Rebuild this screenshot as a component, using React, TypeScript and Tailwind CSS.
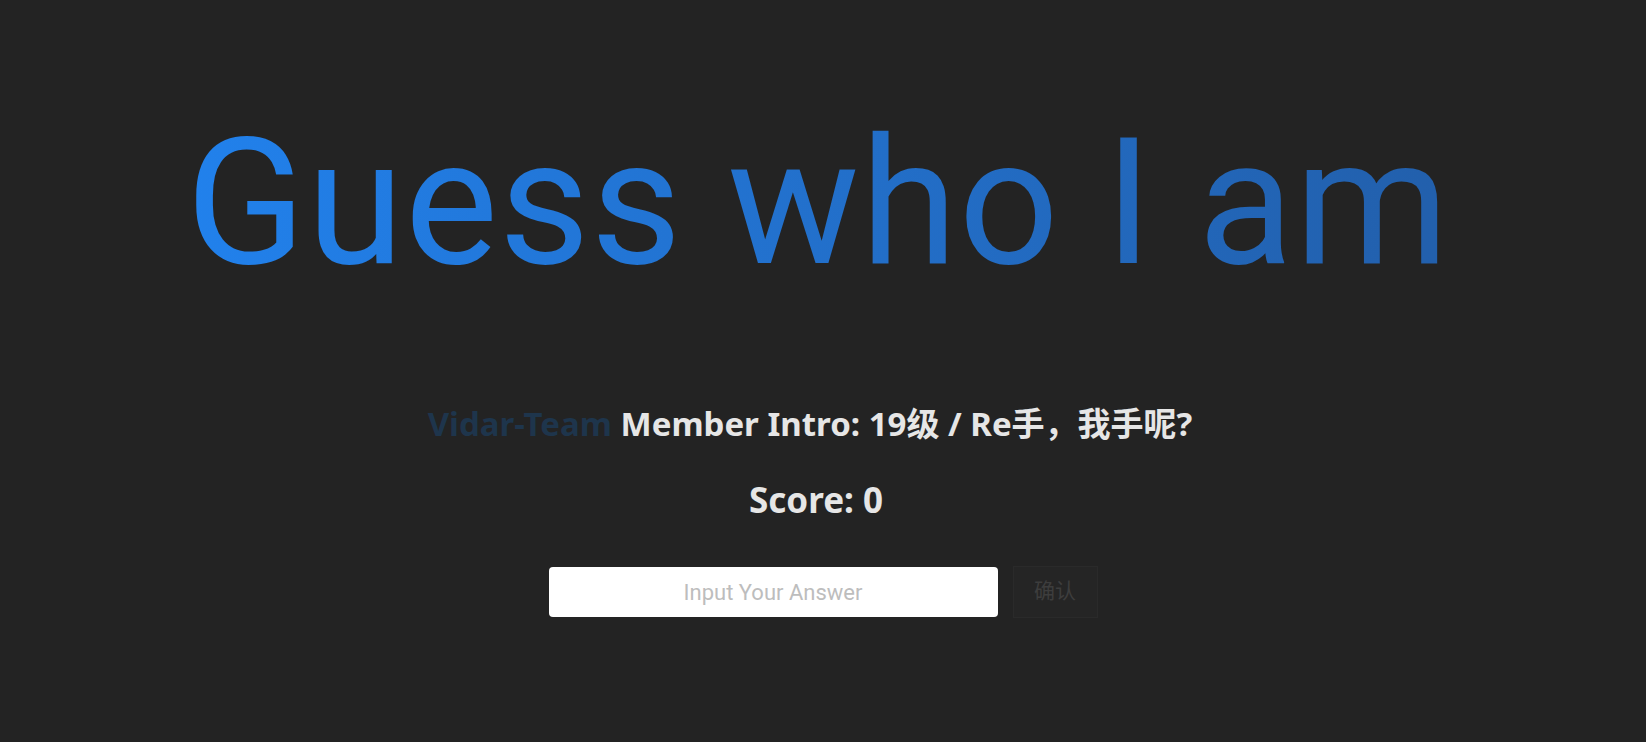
import React from 'react';

const App: React.FC = () => {
  return (
    <div
      className="min-h-screen w-full bg-[#232323] flex flex-col items-center"
      style={{ fontFamily: 'Roboto, "Noto Sans CJK SC", sans-serif' }}
    >
      {/* Title */}
      <h1 className="mt-[115px] pr-[10px] text-[176px] leading-none font-normal tracking-[1px] bg-gradient-to-r from-[#2181ec] to-[#225fab] bg-clip-text text-transparent pb-4">
        Guess who I am
      </h1>

      {/* Intro */}
      <p className="mt-[96px] pr-[26px] text-[33px] font-bold text-[#e6e6e6] leading-tight font-['Noto_Sans','Noto_Sans_CJK_SC',sans-serif]">
        <span className="text-[#1e354c]">Vidar-Team</span> Member Intro: 19级 / Re手，我手呢?
      </p>

      {/* Score */}
      <p className="mt-[34px] pr-[14px] text-[35px] font-bold text-[#e6e6e6] leading-tight font-['Noto_Sans',sans-serif]">Score: 0</p>

      {/* Answer form */}
      <div className="mt-[44px] flex items-center gap-[15px]">
        <input
          type="text"
          placeholder="Input Your Answer"
          className="w-[449px] h-[50px] rounded bg-white text-center text-[22px] text-[#333] placeholder:text-[#bdbdbd] outline-none"
        />
        <button className="w-[85px] h-[52px] bg-[#252525] border border-[#2a2a2a] text-[21px] text-[#3d3d3d]">
          确认
        </button>
      </div>
    </div>
  );
};

export default App;
